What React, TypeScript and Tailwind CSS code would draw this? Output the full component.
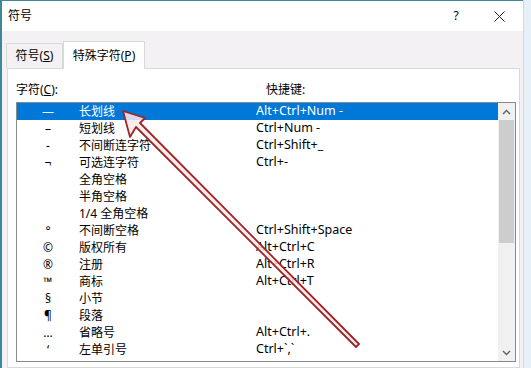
import React from 'react';

const rows = [
  { sym: '—', name: '长划线', key: 'Alt+Ctrl+Num -' },
  { sym: '–', name: '短划线', key: 'Ctrl+Num -' },
  { sym: '-', name: '不间断连字符', key: 'Ctrl+Shift+_' },
  { sym: '¬', name: '可选连字符', key: 'Ctrl+-' },
  { sym: '', name: '全角空格', key: '' },
  { sym: '', name: '半角空格', key: '' },
  { sym: '', name: '1/4 全角空格', key: '' },
  { sym: '°', name: '不间断空格', key: 'Ctrl+Shift+Space' },
  { sym: '©', name: '版权所有', key: 'Alt+Ctrl+C' },
  { sym: '®', name: '注册', key: 'Alt+Ctrl+R' },
  { sym: '™', name: '商标', key: 'Alt+Ctrl+T' },
  { sym: '§', name: '小节', key: '' },
  { sym: '¶', name: '段落', key: '' },
  { sym: '…', name: '省略号', key: 'Alt+Ctrl+.' },
  { sym: '‘', name: '左单引号', key: 'Ctrl+`,`' },
];

const font = { fontFamily: '"Noto Sans", "Noto Sans CJK SC", sans-serif' };

function Arrow() {
  // hollow red arrow pointing at the selected row
  const pts = [
    [123, 111],
    [145, 118],
    [140, 123],
    [359, 344],
    [356, 347],
    [136, 127],
    [130, 137],
  ];
  return (
    <svg className="absolute left-0 top-0 pointer-events-none" width="531" height="368">
      <polygon
        points={pts.map((p) => p.join(',')).join(' ')}
        fill="#fbeaea"
        fillOpacity="0.85"
        stroke="#9e2426"
        strokeWidth="1.8"
        strokeLinejoin="round"
      />
    </svg>
  );
}

export default function App() {
  return (
    <div className="relative w-[531px] h-[368px] overflow-hidden flex bg-[#f3f1f3] text-[12px] text-black" style={font}>
      <div className="w-[2px] bg-[#3f8796]" />
      <div className="flex-1 flex flex-col border-t border-[#3f8796]">
        {/* Title bar */}
        <div className="h-[30px] bg-white flex items-center pl-[6px] pr-[18px]">
          <span className="flex-1">符号</span>
          <span className="w-[12px] text-center mr-[32px]">?</span>
          <svg width="11" height="11" viewBox="0 0 11 11">
            <path d="M0.5 0.5 L10.5 10.5 M10.5 0.5 L0.5 10.5" stroke="#222" strokeWidth="1" />
          </svg>
        </div>

        {/* Body */}
        <div className="flex-1 flex flex-col pl-[5px] pr-[3px] pt-[9px]">
          <div className="flex items-end h-[28px]">
            <div className="h-[25px] w-[57px] ml-[-1px] flex items-center justify-center border border-b-0 border-[#d9d9d9] bg-[#f3f1f3]">
              符号(<span className="underline">S</span>)
            </div>
            <div className="h-[28px] w-[82px] flex items-center justify-center border border-b-0 border-[#d9d9d9] bg-white mb-[-1px] relative z-10">
              特殊字符(<span className="underline">P</span>)
            </div>
          </div>
          <div className="flex-1 bg-white border border-[#d9d9d9] pl-[8px] pr-[3px] pt-[12px]">
            <div className="flex h-[17px] items-center">
              <span className="w-[250px]">字符(<span className="underline">C</span>):</span>
              <span>快捷键:</span>
            </div>
            <div className="mt-[4px] h-[260px] border border-[#8a8a8a] flex">
              <div className="flex-1 flex flex-col">
                {rows.map((r, i) => (
                  <div
                    key={i}
                    className={`h-[17px] flex items-center shrink-0 ${i === 0 ? 'bg-[#0078d7] text-white' : ''}`}
                  >
                    <span className="w-[62px] text-center">{r.sym}</span>
                    <span className="w-[177px]">{r.name}</span>
                    <span className="text-[12.5px]">{r.key}</span>
                  </div>
                ))}
              </div>
              <div className="w-[17px] bg-[#f0f0f0] flex flex-col">
                <div className="h-[17px] flex items-center justify-center">
                  <svg width="9" height="6" viewBox="0 0 9 6">
                    <path d="M1 5 L4.5 1.5 L8 5" fill="none" stroke="#606060" strokeWidth="1.4" />
                  </svg>
                </div>
                <div className="mx-[1px] h-[123px] bg-[#cdcdcd]" />
                <div className="flex-1" />
                <div className="h-[17px] flex items-center justify-center">
                  <svg width="9" height="6" viewBox="0 0 9 6">
                    <path d="M1 1 L4.5 4.5 L8 1" fill="none" stroke="#606060" strokeWidth="1.4" />
                  </svg>
                </div>
              </div>
            </div>
          </div>
        </div>
      </div>
      <div className="w-[8px] bg-[#e6f0f8] border-l border-[#cfd8e0]" />
      <Arrow />
    </div>
  );
}
